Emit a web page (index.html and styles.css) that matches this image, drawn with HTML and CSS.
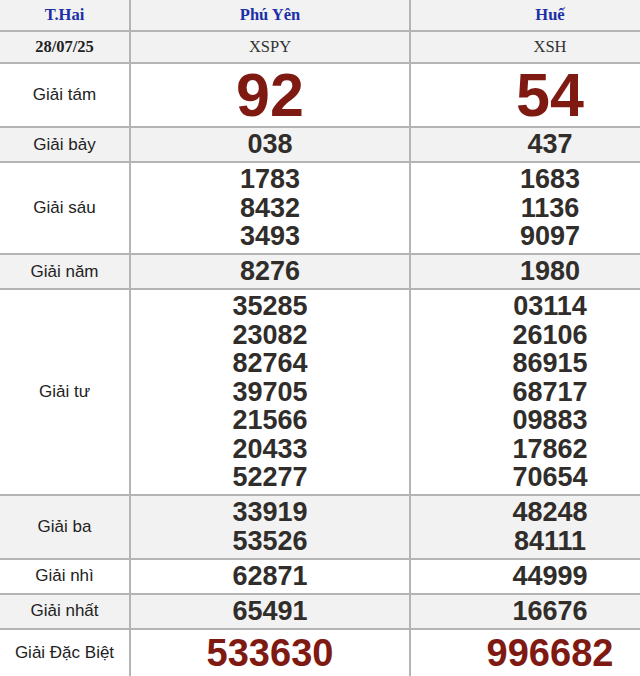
FILE: index.html
```html
<!DOCTYPE html>
<html lang="vi">
<head>
<meta charset="utf-8">
<title>XSMT</title>
<link rel="stylesheet" href="styles.css">
</head>
<body>
<table class="kq">
  <colgroup><col class="c-label"><col class="c-prov"><col class="c-prov"></colgroup>
  <tr class="head gray">
    <th class="day">T.Hai</th>
    <th class="prov">Phú Yên</th>
    <th class="prov">Huế</th>
  </tr>
  <tr class="code gray">
    <td class="date">28/07/25</td>
    <td>XSPY</td>
    <td>XSH</td>
  </tr>
  <tr class="big">
    <td class="lbl">Giải tám</td>
    <td class="red g8">92</td>
    <td class="red g8">54</td>
  </tr>
  <tr class="gray">
    <td class="lbl">Giải bảy</td>
    <td class="num"><div>038</div></td>
    <td class="num"><div>437</div></td>
  </tr>
  <tr>
    <td class="lbl">Giải sáu</td>
    <td class="num"><div>1783</div><div>8432</div><div>3493</div></td>
    <td class="num"><div>1683</div><div>1136</div><div>9097</div></td>
  </tr>
  <tr class="gray">
    <td class="lbl">Giải năm</td>
    <td class="num"><div>8276</div></td>
    <td class="num"><div>1980</div></td>
  </tr>
  <tr>
    <td class="lbl">Giải tư</td>
    <td class="num"><div>35285</div><div>23082</div><div>82764</div><div>39705</div><div>21566</div><div>20433</div><div>52277</div></td>
    <td class="num"><div>03114</div><div>26106</div><div>86915</div><div>68717</div><div>09883</div><div>17862</div><div>70654</div></td>
  </tr>
  <tr class="gray">
    <td class="lbl">Giải ba</td>
    <td class="num"><div>33919</div><div>53526</div></td>
    <td class="num"><div>48248</div><div>84111</div></td>
  </tr>
  <tr>
    <td class="lbl">Giải nhì</td>
    <td class="num"><div>62871</div></td>
    <td class="num"><div>44999</div></td>
  </tr>
  <tr class="gray">
    <td class="lbl">Giải nhất</td>
    <td class="num"><div>65491</div></td>
    <td class="num"><div>16676</div></td>
  </tr>
  <tr class="db">
    <td class="lbl">Giải Đặc Biệt</td>
    <td class="red gdb">533630</td>
    <td class="red gdb">996682</td>
  </tr>
</table>
</body>
</html>
```
FILE: styles.css
```css
html, body {
  margin: 0;
  padding: 0;
  background: #ffffff;
  overflow: hidden;
}
.kq {
  border-collapse: separate;
  border-spacing: 0;
  table-layout: fixed;
  width: 691px;
  margin: -1px 0 0 -1px;
  font-family: "Liberation Sans", Arial, sans-serif;
  color: #333333;
}
.c-label { width: 131px; }
.c-prov { width: 280px; }
.kq th, .kq td {
  border: 1px solid #b4b4b4;
  padding: 0;
  text-align: center;
  vertical-align: middle;
}
.gray th, .gray td { background: #f2f2f2; }
.head th {
  height: 30px;
  font-family: "Liberation Serif", "Times New Roman", serif;
  font-weight: bold;
  font-size: 16.5px;
  color: #1b2fa6;
}
.code td {
  height: 30px;
  font-family: "Liberation Serif", "Times New Roman", serif;
  font-size: 16.5px;
  color: #333333;
}
.code td.date {
  font-weight: bold;
  color: #222222;
}
.kq td.lbl {
  font-size: 17px;
  color: #222222;
}
.kq td.num {
  padding: 2.25px 0;
}
.num div {
  font-size: 27px;
  font-weight: bold;
  line-height: 28.5px;
  color: #302d2a;
}
.big td { height: 62px; }
.red { color: #7e1a12; font-weight: bold; }
.g8 {
  font-size: 61px;
  line-height: 62px;
}
.db td { height: 46px; }
.gdb {
  font-size: 38px;
  line-height: 44px;
}
```
